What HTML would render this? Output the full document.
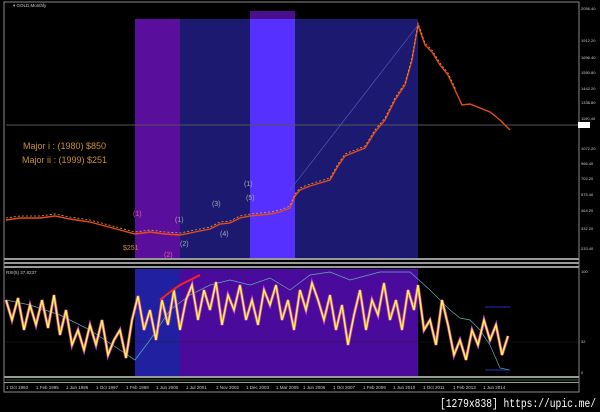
<!DOCTYPE html>
<html><head><style>
body{margin:0;background:#000;width:600px;height:412px;overflow:hidden;font-family:"Liberation Sans",sans-serif}
svg{display:block}
</style></head><body>
<svg width="600" height="412" viewBox="0 0 600 412" xmlns="http://www.w3.org/2000/svg">
<rect width="600" height="412" fill="#000"/>
<rect x="4" y="2" width="575" height="390" fill="none" stroke="#888" stroke-width="1"/>
<rect x="135" y="19" width="45" height="239" fill="#5a0f9c"/>
<rect x="180" y="19" width="238" height="239" fill="#1c1a70"/>
<rect x="250" y="11" width="45" height="9" fill="#4a0f8c"/>
<rect x="250" y="19" width="45" height="239" fill="#5530ff"/>
<line x1="6" y1="125" x2="578" y2="125" stroke="#555" stroke-width="1"/>
<text x="13" y="7" fill="#ccc" font-size="4.5">▾ GOLD,Monthly</text>
<polyline fill="none" stroke="#e84a1a" stroke-width="1.4" points="6,220 20,218 40,218 55,216 70,219 90,222 105,226 120,230 135,234 150,232 165,234 180,235 195,232 210,229 220,224 230,223 240,218 250,216 260,215 270,214 280,212 290,208 295,196 300,190 310,186 320,183 330,180 338,166 345,156 355,152 365,148 375,132 385,120 395,100 405,85 412,60 418,25 425,45 432,52 440,65 448,75 456,92 462,105 470,104 480,108 490,112 500,120 510,130"/>
<polyline fill="none" stroke="#f5a030" stroke-width="0.8" stroke-dasharray="2 2" points="6,218 20,216 40,216 55,214 70,217 90,220 105,224 120,228 135,232 150,230 165,232 180,233 195,230 210,227 220,222 230,221 240,216 250,214 260,213 270,212 280,210 290,206 295,194 300,188 310,184 320,181 330,178 338,164 345,154 355,150 365,146 375,130 385,118 395,98 405,83 412,58 418,23 425,43 432,50 440,63 448,73 456,90"/>
<line x1="290" y1="190" x2="418" y2="25" stroke="#6060d0" stroke-width="0.6"/>
<text x="23" y="149" fill="#c89030" font-size="9">Major i : (1980) $850</text>
<text x="22" y="163" fill="#c89030" font-size="9">Major ii : (1999) $251</text>
<g font-size="7">
<text x="123" y="250" fill="#c89030">$251</text>
<text x="133" y="216" fill="#e060a0">(1)</text>
<text x="164" y="257" fill="#e060a0">(2)</text>
<text x="175" y="222" fill="#aaa">(1)</text>
<text x="180" y="246" fill="#aaa">(2)</text>
<text x="212" y="206" fill="#aaa">(3)</text>
<text x="220" y="236" fill="#aaa">(4)</text>
<text x="246" y="200" fill="#aaa">(5)</text>
<text x="244" y="186" fill="#aaa">(1)</text>
</g>
<g fill="#ccc" font-size="4">
<text x="581" y="10">2056.40</text><text x="581" y="42">1912.20</text><text x="581" y="59">1696.40</text>
<text x="581" y="74">1590.80</text><text x="581" y="90">1442.20</text><text x="581" y="104">1338.80</text>
<text x="581" y="120">1190.40</text><text x="581" y="150">1072.20</text><text x="581" y="165">966.40</text>
<text x="581" y="180">702.20</text><text x="581" y="196">575.40</text><text x="581" y="212">464.20</text>
<text x="581" y="230">332.20</text><text x="581" y="250">233.40</text>
<text x="581" y="273">100</text><text x="581" y="343">32</text><text x="581" y="374">0</text>
</g>
<rect x="578" y="122" width="12" height="6" fill="#fff"/>
<rect x="4" y="258" width="575" height="2" fill="#999"/>
<rect x="4" y="262" width="575" height="2" fill="#999"/>
<rect x="4" y="266" width="575" height="2" fill="#999"/>
<rect x="135" y="269" width="45" height="107" fill="#2020a0"/>
<rect x="180" y="269" width="238" height="107" fill="#4a0a9c"/>
<text x="6" y="274" fill="#ccc" font-size="4.5">RSI(5) 37.8237</text>
<line x1="6" y1="342" x2="578" y2="342" stroke="#223" stroke-width="0.6"/>
<polyline fill="none" stroke="#60b0b0" stroke-width="0.7" points="6,300 30,305 60,315 90,330 120,350 135,360 150,340 170,310 190,295 210,285 230,280 250,285 270,278 290,290 310,275 330,272 350,280 380,272 410,272 430,290 440,300 450,310 460,318 470,320 480,330 490,345 500,368 510,370"/>
<polyline fill="none" stroke="#e040e0" stroke-width="3" opacity="0.9" points="6,300 12,320 18,298 24,330 30,305 36,325 42,300 48,328 54,295 60,335 66,310 72,345 78,330 84,350 90,325 96,345 102,320 108,355 114,340 120,330 126,358 132,320 138,296 144,330 150,310 156,340 162,300 168,325 174,290 180,330 186,300 192,285 198,320 204,290 210,310 216,282 222,325 228,295 234,310 240,285 246,320 252,300 258,325 264,290 270,305 276,285 282,320 288,300 294,330 300,290 306,310 312,283 318,300 324,320 330,295 336,330 342,305 348,345 354,315 360,290 366,330 372,300 378,315 384,283 390,320 396,300 402,330 408,290 414,310 418,285 424,330 430,320 436,345 442,300 448,325 454,355 460,340 466,360 472,330 478,345 484,320 490,340 496,325 502,355 508,336"/>
<polyline fill="none" stroke="#ffff30" stroke-width="1.5" points="6,300 12,320 18,298 24,330 30,305 36,325 42,300 48,328 54,295 60,335 66,310 72,345 78,330 84,350 90,325 96,345 102,320 108,355 114,340 120,330 126,358 132,320 138,296 144,330 150,310 156,340 162,300 168,325 174,290 180,330 186,300 192,285 198,320 204,290 210,310 216,282 222,325 228,295 234,310 240,285 246,320 252,300 258,325 264,290 270,305 276,285 282,320 288,300 294,330 300,290 306,310 312,283 318,300 324,320 330,295 336,330 342,305 348,345 354,315 360,290 366,330 372,300 378,315 384,283 390,320 396,300 402,330 408,290 414,310 418,285 424,330 430,320 436,345 442,300 448,325 454,355 460,340 466,360 472,330 478,345 484,320 490,340 496,325 502,355 508,336"/>
<polyline fill="none" stroke="#ff2020" stroke-width="2" points="160,300 170,292 180,285 190,280 200,275"/>
<line x1="485" y1="307" x2="510" y2="307" stroke="#3040ff" stroke-width="0.8"/>
<line x1="485" y1="370" x2="510" y2="370" stroke="#3040ff" stroke-width="0.8"/>
<rect x="4" y="376" width="575" height="2" fill="#999"/>
<line x1="6" y1="380" x2="578" y2="380" stroke="#2a6a2a" stroke-width="1"/>
<rect x="4" y="382" width="575" height="1" fill="#999"/>
<g fill="#ccc" font-size="4.5">
<text x="6" y="389">1 Oct 1993</text><text x="36" y="389">1 Feb 1995</text><text x="66" y="389">1 Jun 1996</text>
<text x="96" y="389">1 Oct 1997</text><text x="126" y="389">1 Feb 1999</text><text x="156" y="389">1 Jun 2000</text>
<text x="186" y="389">1 Jul 2001</text><text x="216" y="389">1 Nov 2002</text><text x="246" y="389">1 Dec 2003</text>
<text x="276" y="389">1 Mar 2005</text><text x="303" y="389">1 Jun 2006</text><text x="333" y="389">1 Oct 2007</text>
<text x="363" y="389">1 Feb 2009</text><text x="393" y="389">1 Jun 2010</text><text x="423" y="389">1 Oct 2011</text>
<text x="453" y="389">1 Feb 2013</text><text x="483" y="389">1 Jun 2014</text>
</g>
<text x="440" y="407" fill="#fff" font-size="12" font-family="Liberation Mono, monospace" textLength="156" lengthAdjust="spacingAndGlyphs">[1279x838] https://upic.me/</text>
</svg>
</body></html>
